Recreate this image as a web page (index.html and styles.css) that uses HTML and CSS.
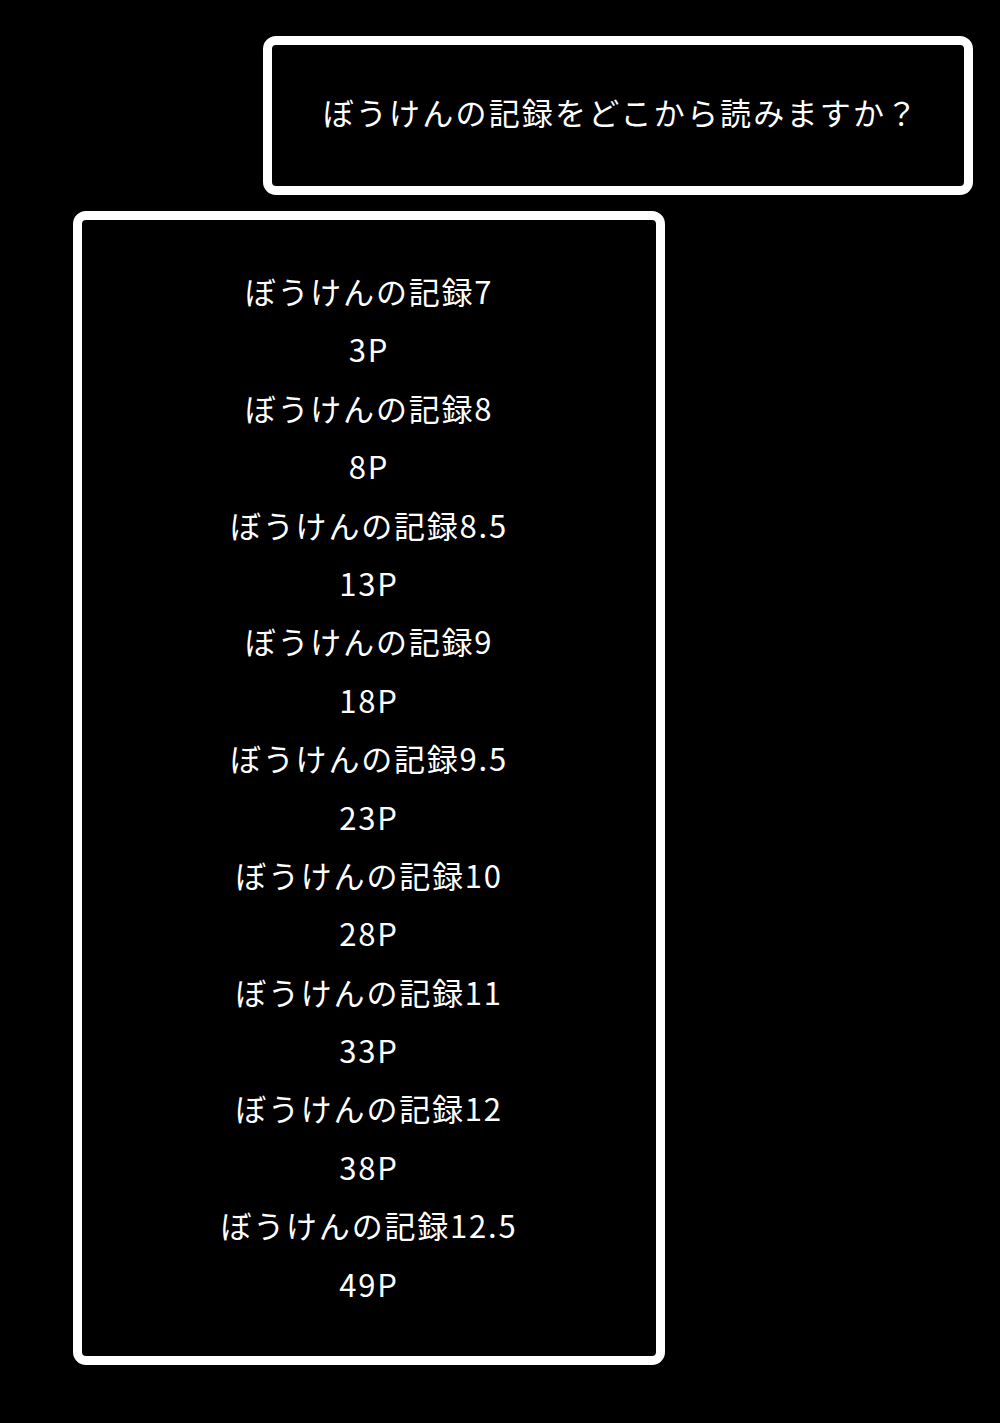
FILE: index.html
```html
<!DOCTYPE html>
<html lang="ja">
<head>
<meta charset="utf-8">
<title>ぼうけんの記録</title>
<link rel="stylesheet" href="styles.css">
</head>
<body>
<main class="screen">
  <div class="window prompt">
    <p class="prompt-text">ぼうけんの記録をどこから読みますか？</p>
  </div>
  <div class="window menu">
    <ul class="menu-list">
      <li>ぼうけんの記録7</li>
      <li>3P</li>
      <li>ぼうけんの記録8</li>
      <li>8P</li>
      <li>ぼうけんの記録8.5</li>
      <li>13P</li>
      <li>ぼうけんの記録9</li>
      <li>18P</li>
      <li>ぼうけんの記録9.5</li>
      <li>23P</li>
      <li>ぼうけんの記録10</li>
      <li>28P</li>
      <li>ぼうけんの記録11</li>
      <li>33P</li>
      <li>ぼうけんの記録12</li>
      <li>38P</li>
      <li>ぼうけんの記録12.5</li>
      <li>49P</li>
    </ul>
  </div>
</main>
</body>
</html>
```

FILE: styles.css
```css
html, body {
  margin: 0;
  padding: 0;
  background: #000;
}

body {
  color: #fff;
  font-family: "Noto Sans CJK JP", "Noto Sans", "DejaVu Sans", sans-serif;
}

.screen {
  width: 1000px;
  height: 1423px;
  display: flex;
  flex-direction: column;
  padding-top: 36px;
  box-sizing: border-box;
}

/* RPG-style message windows: thick white frame, slightly rounded */
.window {
  box-sizing: border-box;
  border: 9px solid #fff;
  border-radius: 13px;
  background: #000;
}

.prompt {
  margin-left: 263px;
  width: 710px;
  height: 159px;
  display: flex;
  align-items: center;
  justify-content: center;
}

.prompt-text {
  margin: 0 0 9px 6px;
  font-size: 31px;
  letter-spacing: 2.2px;
  line-height: 1;
}

.menu {
  margin-top: 16px;
  margin-left: 73px;
  width: 592px;
  height: 1154px;
  padding-top: 42px;
}

.menu-list {
  list-style: none;
  margin: 0;
  padding: 0;
  text-align: center;
}

.menu-list li {
  font-size: 31px;
  line-height: 58.4px;
  height: 58.4px;
  letter-spacing: 1.8px;
}
```
